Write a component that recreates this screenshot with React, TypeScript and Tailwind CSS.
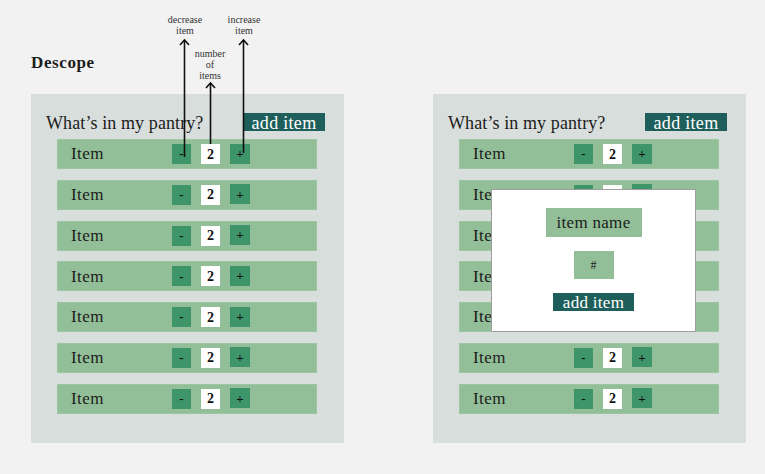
import React from "react";

const serif = { fontFamily: '"Liberation Serif", "DejaVu Serif", serif' };

function Row() {
  return (
    <div className="flex items-center h-[30px] w-[260px] bg-[#93bf98] border border-[#9cc6a1]">
      <span className="w-[114px] pl-[13px] text-[17px] tracking-[0.4px] text-[#1c1c1c]">Item</span>
      <div className="w-[19px] h-[20px] bg-[#3f956a] flex items-center justify-center text-[13px] font-bold text-[#111]">-</div>
      <div className="w-[19px] h-[20px] bg-white ml-[10px] flex items-center justify-center text-[14px] font-bold text-[#111]">2</div>
      <div className="w-[20px] h-[20px] bg-[#3f956a] ml-[10px] -mt-[1px] flex items-center justify-center text-[13px] font-bold text-[#111]">+</div>
    </div>
  );
}

function Panel({ children }: { children?: React.ReactNode }) {
  return (
    <div className="relative w-[313px] h-[349px] bg-[#d8dedb] pt-[19px]">
      <div className="flex items-center justify-between h-[18px] pl-[15px] pr-[19px]">
        <span className="text-[18px] tracking-[0.1px] text-[#1c1c1c] leading-none mt-[1px]">What’s in my pantry?</span>
        <div className="w-[82px] h-[18px] bg-[#1f5f5b] text-white text-[18px] tracking-[0.3px] leading-none flex items-center justify-center pt-[1px]">add item</div>
      </div>
      <div className="flex flex-col gap-[10.8px] mt-[8px] ml-[26px]">
        {Array.from({ length: 7 }).map((_, i) => (
          <Row key={i} />
        ))}
      </div>
      {children}
    </div>
  );
}

export default function App() {
  return (
    <div className="relative w-[765px] h-[474px] bg-[#f2f2f2] overflow-hidden" style={serif}>
      <div className="h-[94px] pl-[31px] pt-[50px]">
        <span className="text-[17px] font-bold tracking-[0.6px] text-[#1c1c1c]">Descope</span>
      </div>
      <div className="flex pl-[31px] gap-[89px]">
        <Panel />
        <Panel>
          <div className="absolute left-[58px] top-[95px] w-[205px] h-[143px] bg-white border border-[#9d9d9d] flex flex-col items-center pt-[18px]">
            <div className="w-[96px] h-[29px] bg-[#93bf98] flex items-center justify-center text-[17px] tracking-[0.3px] text-[#1c1c1c]">item name</div>
            <div className="w-[40px] h-[28px] bg-[#93bf98] mt-[14px] flex items-center justify-center text-[12px] text-[#1c1c1c]">#</div>
            <div className="w-[81px] h-[18px] bg-[#1f5f5b] mt-[14px] text-white text-[17px] tracking-[0.3px] leading-none flex items-center justify-center pt-[1px]">add item</div>
          </div>
        </Panel>
      </div>

      <div className="absolute left-[155px] top-[14px] w-[60px] text-center text-[10px] leading-[11px] text-[#333]">
        decrease<br />item
      </div>
      <div className="absolute left-[214px] top-[14px] w-[60px] text-center text-[10px] leading-[11px] text-[#333]">
        increase<br />item
      </div>
      <div className="absolute left-[180px] top-[48px] w-[60px] text-center text-[10px] leading-[11px] text-[#333]">
        number<br />of<br />items
      </div>

      <svg className="absolute inset-0 pointer-events-none" width="765" height="474">
        <g stroke="#111" strokeWidth="1.6" fill="none">
          <line x1="184.5" y1="40" x2="184.5" y2="157" />
          <polyline points="180,45 184.5,40 189,45" />
          <line x1="243.5" y1="40" x2="243.5" y2="153" />
          <polyline points="239,45 243.5,40 248,45" />
          <line x1="210.5" y1="83" x2="210.5" y2="144" />
          <polyline points="206,88 210.5,83 215,88" />
        </g>
      </svg>
    </div>
  );
}
